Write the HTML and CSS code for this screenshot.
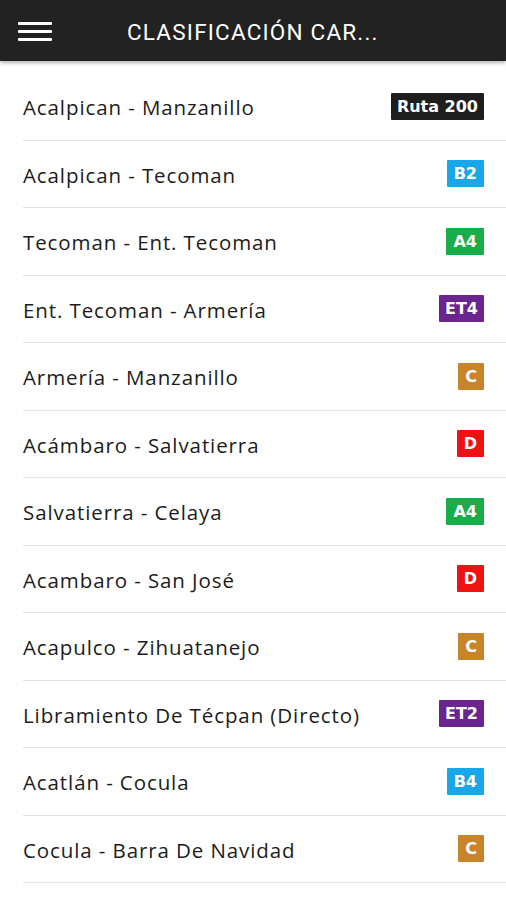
FILE: index.html
```html
<!DOCTYPE html>
<html lang="es">
  <head>
    <meta charset="UTF-8" />
    <meta name="viewport" content="width=device-width, initial-scale=1.0" />
    <title>Clasificación Carreteras</title>
    <link rel="stylesheet" href="styles.css">
  </head>
  <body>
    <header class="topbar">
      <div class="menu-btn">
        <span></span><span></span><span></span>
      </div>
      <h1 class="title">CLASIFICACIÓN CAR...</h1>
    </header>

    <!-- Route list -->
    <ul class="routes">
      <li class="route"><span class="name">Acalpican - Manzanillo</span><span class="badge black">Ruta 200</span></li>
      <li class="route"><span class="name">Acalpican - Tecoman</span><span class="badge blue">B2</span></li>
      <li class="route"><span class="name">Tecoman - Ent. Tecoman</span><span class="badge green">A4</span></li>
      <li class="route"><span class="name">Ent. Tecoman - Armería</span><span class="badge purple">ET4</span></li>
      <li class="route"><span class="name">Armería - Manzanillo</span><span class="badge orange">C</span></li>
      <li class="route"><span class="name">Acámbaro - Salvatierra</span><span class="badge red">D</span></li>
      <li class="route"><span class="name">Salvatierra - Celaya</span><span class="badge green">A4</span></li>
      <li class="route"><span class="name">Acambaro - San José</span><span class="badge red">D</span></li>
      <li class="route"><span class="name">Acapulco - Zihuatanejo</span><span class="badge orange">C</span></li>
      <li class="route"><span class="name">Libramiento De Técpan (Directo)</span><span class="badge purple">ET2</span></li>
      <li class="route"><span class="name">Acatlán - Cocula</span><span class="badge blue">B4</span></li>
      <li class="route"><span class="name">Cocula - Barra De Navidad</span><span class="badge orange">C</span></li>
    </ul>
  </body>
</html>
```

FILE: styles.css
```css
body {
  margin: 0;
  background: #fff;
  font-family: "Open Sans", Arial, sans-serif;
  color: #1c1c1c;
}
.topbar {
  height: 61px;
  background: #222;
  display: flex;
  align-items: center;
  box-shadow: 0 2px 4px rgba(0, 0, 0, 0.3);
}
.menu-btn {
  width: 34px;
  margin: 2px 0 0 18px;
  display: flex;
  flex-direction: column;
  gap: 4.5px;
}
.menu-btn span {
  display: block;
  height: 3.5px;
  background: #fff;
  border-radius: 1px;
}
.title {
  margin: 2px 0 0 75px;
  color: #fff;
  font-family: Roboto, Arial, sans-serif;
  font-weight: 400;
  font-size: 22.5px;
  letter-spacing: 1.2px;
}
.routes {
  list-style: none;
  margin: 12px 0 0;
  padding: 0 0 0 23px;
}
.route {
  height: 66.5px;
  display: flex;
  align-items: center;
  justify-content: space-between;
  padding-right: 22px;
  border-bottom: 1px solid #e3e3e3;
}
.name {
  font-size: 20.5px;
  letter-spacing: 0.9px;
  padding-top: 2px;
}
.badge {
  color: #fff;
  font-family: "DejaVu Sans", Verdana, sans-serif;
  font-weight: bold;
  font-size: 16px;
  line-height: 27px;
  padding: 0 7px;
  border-radius: 1px;
}
.black { background: #1e1e1e; padding: 0 6px; }
.blue { background: #1aa6ea; }
.green { background: #18ad4a; }
.purple { background: #6a2590; padding: 0 6px; }
.orange { background: #c8842a; }
.red { background: #ee1212; }
```
